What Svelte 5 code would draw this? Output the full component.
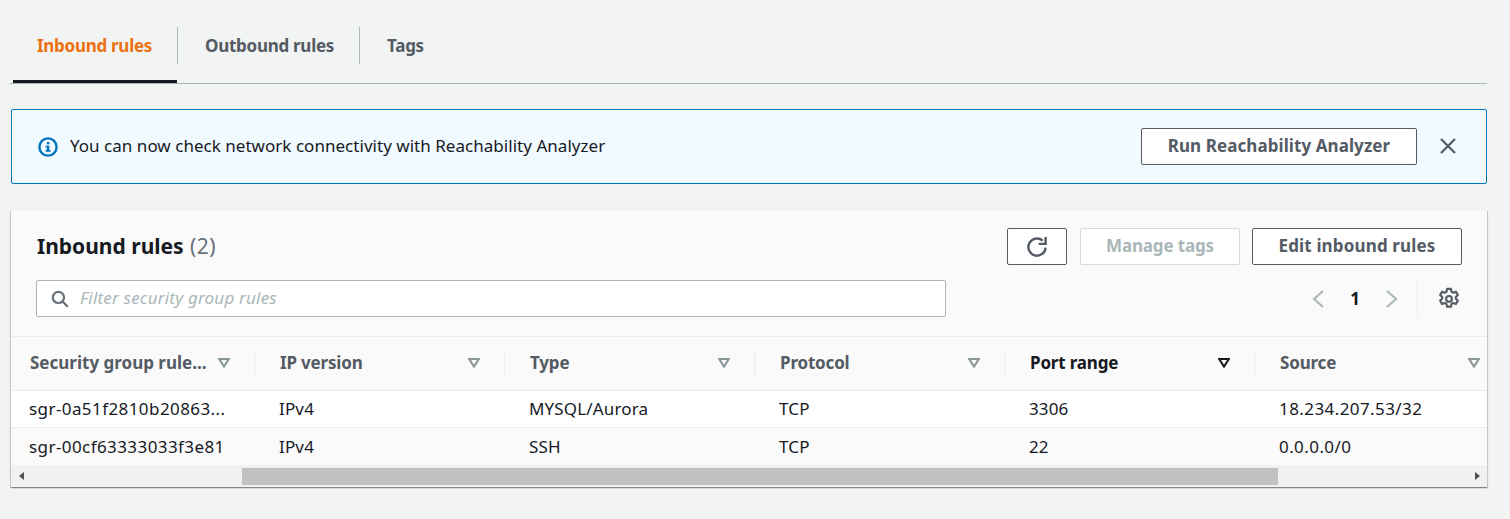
<script lang="ts">
	const tabs = ['Inbound rules', 'Outbound rules', 'Tags'];
	const columns = ['Security group rule...', 'IP version', 'Type', 'Protocol', 'Port range', 'Source'];
	const rows = [
		['sgr-0a51f2810b20863...', 'IPv4', 'MYSQL/Aurora', 'TCP', '3306', '18.234.207.53/32'],
		['sgr-00cf63333033f3e81', 'IPv4', 'SSH', 'TCP', '22', '0.0.0.0/0']
	];
	const sortedColumn = 'Port range';
</script>

<div class="page">
	<!-- Tabs -->
	<nav class="tabs">
		{#each tabs as tab, i}
			<button type="button" class="tab" class:active={i === 0}>
				<span class="tab-label" class:last={i === tabs.length - 1}>{tab}</span>
			</button>
		{/each}
	</nav>

	<!-- Flash banner -->
	<div class="flash">
		<svg class="info-icon" width="20" height="20" viewBox="0 0 20 20" aria-hidden="true">
			<circle cx="10" cy="10" r="8.6" fill="none" stroke="#0073bb" stroke-width="2.4" />
			<rect x="8.8" y="5" width="2.6" height="2.4" fill="#0073bb" />
			<path d="M7.6 8.7h3.7v4.2h1.3v1.9H7.6v-1.9h1.2v-2.3H7.6z" fill="#0073bb" />
		</svg>
		<span class="flash-text">You can now check network connectivity with Reachability Analyzer</span>
		<button type="button" class="btn run-btn">Run Reachability Analyzer</button>
		<button type="button" class="close-btn" aria-label="Dismiss">
			<svg width="18" height="18" viewBox="0 0 18 18" aria-hidden="true">
				<path d="M2 2l14 14M16 2L2 16" fill="none" stroke="#545b64" stroke-width="2.2" />
			</svg>
		</button>
	</div>

	<!-- Rules card -->
	<section class="card">
		<header class="card-head">
			<div class="title-row">
				<h2>Inbound rules <span class="count">(2)</span></h2>
				<div class="actions">
					<button type="button" class="btn refresh-btn" aria-label="Refresh">
						<svg width="24" height="24" viewBox="0 0 24 24" aria-hidden="true">
							<path
								d="M20.6 12.6a8.6 8.6 0 1 1-2.9-7"
								fill="none"
								stroke="#545b64"
								stroke-width="2.4"
							/>
							<path d="M20.6 2v6.9h-6.9" fill="none" stroke="#545b64" stroke-width="2.4" />
						</svg>
					</button>
					<button type="button" class="btn disabled-btn" disabled>Manage tags</button>
					<button type="button" class="btn edit-btn">Edit inbound rules</button>
				</div>
			</div>
			<div class="filter-row">
				<div class="filter">
					<svg width="18" height="18" viewBox="0 0 18 18" aria-hidden="true">
						<circle cx="7.4" cy="7.4" r="5.6" fill="none" stroke="#687078" stroke-width="2.2" />
						<path d="M11.4 11.4l5.4 5.4" fill="none" stroke="#687078" stroke-width="2.2" />
					</svg>
					<span class="placeholder">Filter security group rules</span>
				</div>
				<div class="pager">
					<svg width="14" height="20" viewBox="0 0 14 20" aria-hidden="true">
						<path d="M12 2L3 10l9 8" fill="none" stroke="#aab7b8" stroke-width="2.2" />
					</svg>
					<span class="page-num">1</span>
					<svg width="14" height="20" viewBox="0 0 14 20" aria-hidden="true">
						<path d="M2 2l9 8-9 8" fill="none" stroke="#aab7b8" stroke-width="2.2" />
					</svg>
					<span class="pager-sep"></span>
					<svg class="gear" width="24" height="24" viewBox="0 0 20 20" aria-hidden="true">
						<path
							d="M8.4 1.6h3.2l.5 2.3 1.5.8 2.2-.8 1.6 2.8-1.7 1.5v1.6l1.7 1.5-1.6 2.8-2.2-.8-1.5.8-.5 2.3H8.4l-.5-2.3-1.5-.8-2.2.8-1.6-2.8 1.7-1.5V8.2L2.6 6.7l1.6-2.8 2.2.8 1.5-.8z"
							fill="none"
							stroke="#545b64"
							stroke-width="1.8"
							stroke-linejoin="round"
						/>
						<circle cx="10" cy="9.9" r="2.4" fill="none" stroke="#545b64" stroke-width="1.8" />
					</svg>
				</div>
			</div>
		</header>

		<div class="table">
			<div class="row head-row">
				{#each columns as col, i}
					<div class="th" class:sorted={col === sortedColumn}>
						<span class="th-label">{col}</span>
						<svg class="caret" width="12" height="10" viewBox="0 0 12 10" aria-hidden="true">
							<path d="M1.2 1h9.6L6 8.6z" fill="none" stroke="currentColor" stroke-width="2" />
						</svg>
						{#if i < columns.length - 1}
							<span class="col-sep"></span>
						{/if}
					</div>
				{/each}
			</div>
			{#each rows as row, r}
				<div class="row body-row" class:odd={r === 1}>
					{#each row as cell}
						<div class="td">{cell}</div>
					{/each}
				</div>
			{/each}
		</div>

		<!-- Scrollbar -->
		<div class="scrollbar">
			<span class="arrow left"></span>
			<span class="thumb"></span>
			<span class="arrow right"></span>
		</div>
	</section>
</div>

<style>
	:global(body) {
		margin: 0;
		background: #f2f3f3;
	}

	.page {
		width: 1510px;
		height: 519px;
		box-sizing: border-box;
		padding-top: 27px;
		overflow: hidden;
		background: #f2f3f3;
		font-family: 'Noto Sans', 'Open Sans', sans-serif;
		font-size: 17px;
		color: #16191f;
	}

	button {
		font-family: inherit;
		margin: 0;
	}

	/* Tabs */
	.tabs {
		display: flex;
		height: 57px;
		margin: 0 23px 0 10px;
		padding-left: 3px;
		box-sizing: border-box;
		border-bottom: 1px solid #aab7b8;
	}

	.tab {
		position: relative;
		height: 56px;
		padding: 0;
		border: 0;
		background: none;
		font-size: 17px;
		letter-spacing: -0.28px;
		font-weight: 700;
		color: #545b64;
		box-sizing: border-box;
	}

	.tab.active {
		color: #ec7211;
	}

	.tab.active::after {
		content: '';
		position: absolute;
		left: 0;
		right: 1px;
		bottom: 0;
		height: 3px;
		background: #16191f;
	}

	.tab-label {
		display: flex;
		align-items: center;
		height: 37px;
		margin-bottom: 19px;
		padding: 0 25px 0 27px;
		border-right: 1px solid #aab7b8;
	}

	.tab.active .tab-label {
		padding: 0 25px 0 24px;
	}

	.tab-label.last {
		border-right: 0;
	}

	/* Flash */
	.flash {
		display: flex;
		align-items: center;
		height: 75px;
		box-sizing: border-box;
		margin: 25px 23px 0 11px;
		padding: 0 29px 0 26px;
		background: #f1faff;
		border: 1px solid #0073bb;
		border-radius: 2px;
	}

	.flash-text {
		flex: 1;
		margin: -2px 0 0 12px;
		letter-spacing: 0.03px;
	}

	.btn {
		height: 37px;
		box-sizing: border-box;
		padding: 0 0 2px;
		background: #fff;
		border: 1px solid #545b64;
		border-radius: 2px;
		font-size: 17px;
		font-weight: 700;
		color: #545b64;
	}

	.run-btn {
		width: 276px;
		letter-spacing: 0.08px;
	}

	.close-btn {
		display: flex;
		margin: -1px 0 0 22px;
		padding: 0;
		border: 0;
		background: none;
	}

	/* Card */
	.card {
		margin: 26px 23px 0 11px;
		height: 277px;
		background: #fff;
		box-shadow:
			0 -1px 0 0 #eaeded,
			0 1px 1px 0 rgba(0, 28, 36, 0.3),
			1px 1px 1px 0 rgba(0, 28, 36, 0.15),
			-1px 1px 1px 0 rgba(0, 28, 36, 0.15);
		display: flex;
		flex-direction: column;
	}

	.card-head {
		height: 127px;
		box-sizing: border-box;
		padding: 18px 25px 0 26px;
		background: #fafafa;
		border-bottom: 1px solid #eaeded;
	}

	.title-row {
		display: flex;
		justify-content: space-between;
		align-items: flex-start;
	}

	h2 {
		margin: 5px 0 0;
		font-size: 21px;
		line-height: 26px;
		font-weight: 700;
		color: #16191f;
	}

	.count {
		font-weight: 400;
		color: #687078;
		margin-left: 1px;
		letter-spacing: 0.4px;
	}

	.actions {
		display: flex;
		gap: 13px;
	}

	.refresh-btn {
		display: flex;
		align-items: center;
		justify-content: center;
		width: 60px;
		padding: 0;
	}

	.disabled-btn {
		width: 160px;
		border-color: #d5dbdb;
		color: #aab7b8;
		margin-right: -1px;
		letter-spacing: -0.15px;
	}

	.edit-btn {
		width: 210px;
		letter-spacing: 0.15px;
	}

	.filter-row {
		display: flex;
		justify-content: space-between;
		align-items: center;
		margin-top: 15px;
		margin-left: -1px;
	}

	.filter {
		display: flex;
		align-items: center;
		gap: 11px;
		width: 910px;
		height: 37px;
		box-sizing: border-box;
		padding-left: 14px;
		background: #fff;
		border: 1px solid #aab7b8;
		border-radius: 2px;
	}

	.placeholder {
		font-style: italic;
		color: #aab7b8;
		letter-spacing: 0.2px;
		margin-top: -2px;
	}

	.pager {
		display: flex;
		align-items: center;
		padding-right: 1px;
	}

	.page-num {
		width: 60px;
		text-align: center;
		font-weight: 700;
		color: #16191f;
	}

	.pager-sep {
		width: 1px;
		height: 37px;
		margin: 0 19px 0 18px;
		background: #eaeded;
	}

	/* Table */
	.table {
		flex: 1;
		overflow: hidden;
	}

	.row {
		display: grid;
		grid-template-columns: 244px 250px 250px 250px 250px 232px;
	}

	.head-row {
		height: 54px;
		background: #fafafa;
		border-bottom: 1px solid #eaeded;
		box-sizing: border-box;
	}

	.th {
		position: relative;
		display: flex;
		align-items: center;
		justify-content: space-between;
		padding: 0 25px 0 25px;
		font-weight: 700;
		color: #545b64;
		margin-top: -2px;
		letter-spacing: -0.18px;
	}

	.th:first-child {
		padding-left: 19px;
		letter-spacing: 0;
	}

	.th:last-child {
		padding-right: 7px;
	}

	.th.sorted {
		color: #16191f;
	}

	.caret {
		color: #879596;
	}

	.th.sorted .caret {
		color: #16191f;
	}

	.col-sep {
		position: absolute;
		right: 0;
		top: 15px;
		width: 1px;
		height: 26px;
		background: #eaeded;
	}

	.body-row {
		height: 37px;
		background: #fff;
		border-bottom: 1px solid #eaeded;
		box-sizing: border-box;
	}

	.body-row.odd {
		background: #fafafa;
		border-bottom: 0;
	}

	.td {
		display: flex;
		align-items: center;
		padding-left: 24px;
		white-space: nowrap;
		letter-spacing: 0.15px;
		margin-top: -2px;
	}

	.odd .td {
		margin-top: 0;
	}

	.td:first-child,
	.td:last-child {
		letter-spacing: 0.42px;
	}

	.td:first-child {
		padding-left: 18px;
	}

	/* Scrollbar */
	.scrollbar {
		position: relative;
		display: flex;
		align-items: center;
		height: 22px;
		background: #f1f1f1;
	}

	.thumb {
		position: absolute;
		left: 231px;
		top: 3px;
		width: 1036px;
		height: 17px;
		background: #c1c1c1;
	}

	.arrow {
		position: absolute;
		top: 7px;
		width: 0;
		height: 0;
		border-top: 4px solid transparent;
		border-bottom: 4px solid transparent;
	}

	.arrow.left {
		left: 8px;
		border-right: 5px solid #505050;
	}

	.arrow.right {
		right: 7px;
		border-left: 5px solid #505050;
	}
</style>
